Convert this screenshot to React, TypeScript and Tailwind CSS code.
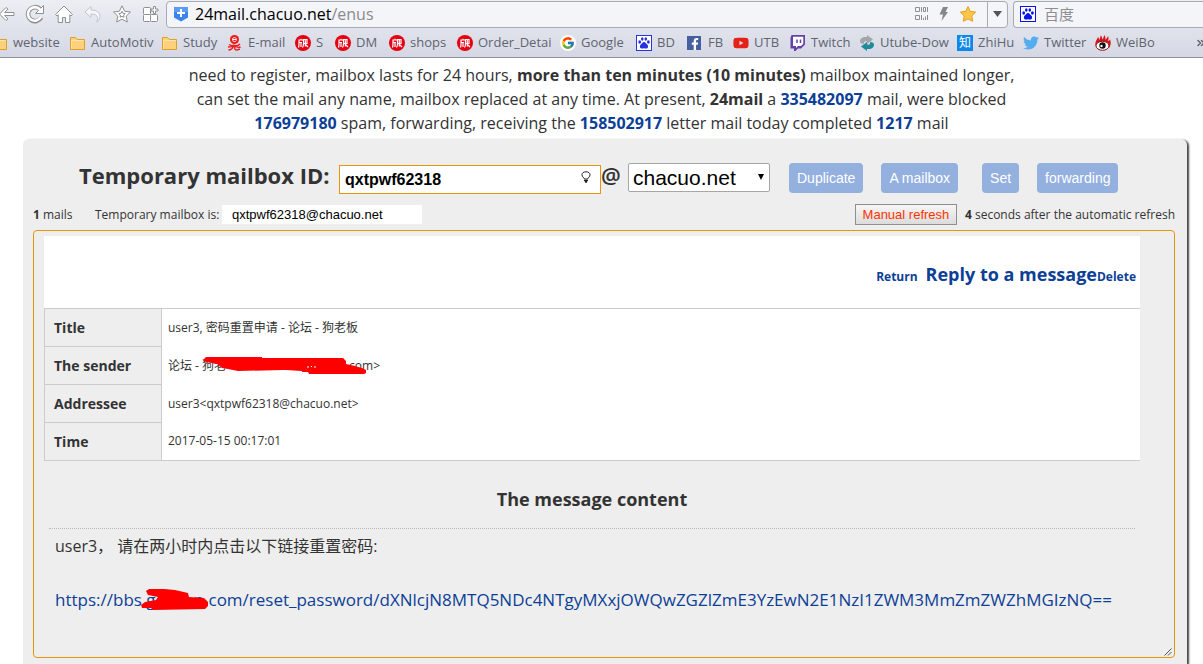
import type { ReactNode } from 'react';
import { FaFacebookF, FaTwitter, FaYoutube } from 'react-icons/fa';
import { FcGoogle } from 'react-icons/fc';
import { ChevronsRight } from 'lucide-react';

const NAV_ICON = 'h-5 w-5 shrink-0';

function BackIcon() {
  return (
    <svg viewBox="0 0 20 20" className={NAV_ICON}>
      <path d="M3.500 10 10 3.500l2 1.600-3.400 3.400H18v3H8.600l3.400 3.400-2 1.600z" fill="#fff" stroke="#8f8f93" strokeLinejoin="round" />
    </svg>
  );
}

function ReloadIcon() {
  return (
    <svg viewBox="0 0 20 20" className={NAV_ICON} fill="none">
      <path d="M16.200 13.500A7 7 0 1 1 14.800 5" stroke="#8f8f93" strokeWidth="4.600" />
      <path d="M18.500 1.500v8h-8z" fill="#fff" stroke="#8f8f93" strokeLinejoin="round" />
      <path d="M15.800 13A6.800 6.800 0 1 1 15 5.600" stroke="#fff" strokeWidth="2.600" />
    </svg>
  );
}

function HomeIcon() {
  return (
    <svg viewBox="0 0 20 20" className={NAV_ICON} fill="#fff" stroke="#8f8f93" strokeLinejoin="round">
      <path d="M1.500 10.500 10 2l8.500 8.500-1.500 1.500-1.200-1.200V18.500h-4.300v-5h-3v5H4.200v-7.700L3 12z" />
    </svg>
  );
}

function UndoIcon() {
  return (
    <svg viewBox="0 0 20 20" className={NAV_ICON} fill="#f5f6fa" stroke="#c3c5cc" strokeLinejoin="round">
      <path d="M2 8 8 2.500V6c6 0 9 2.500 9 6.500 0 2.500-1.500 4.500-3.500 5.500 1-1.500 1.500-3 1-4.500C14 11 12 10 8 10v3.500z" />
    </svg>
  );
}

function StarOutlineIcon() {
  return (
    <svg viewBox="0 0 20 20" className={NAV_ICON} fill="#fff" stroke="#8f8f93" strokeLinejoin="round">
      <path d="m10 1.800 2.600 5.400 5.900.8-4.300 4.100 1.100 5.900-5.300-2.900L4.700 18l1.100-5.900L1.500 8l5.900-.8z" />
      <path d="m10 7.300 1 2 2.200.3-1.600 1.500.4 2.200-2-1-2 1 .4-2.200-1.600-1.500 2.200-.3z" />
    </svg>
  );
}

function AppsIcon() {
  return (
    <svg viewBox="0 0 20 20" className={NAV_ICON} fill="#fff" stroke="#8f8f93">
      <rect x="2.500" y="3.500" width="7" height="7" rx="1" />
      <rect x="2.500" y="10.500" width="7" height="7" rx="1" />
      <rect x="9.500" y="10.500" width="7" height="7" rx="1" />
      <path d="M12.500 2.500h2v2.500H17v2h-2.500v2.500h-2V7H10V5h2.500z" />
    </svg>
  );
}

function ShieldIcon() {
  return (
    <svg viewBox="0 0 16 16" className="h-4 w-4 shrink-0">
      <path d="M1 1h14v10.500L8 15.500l-7-4z" fill="#3b83ee" />
      <path d="M1 1h14v5H1z" fill="#5b9af5" />
      <path d="M8 3v8M4 7h8" stroke="#fff" strokeWidth="2" />
    </svg>
  );
}

function QrIcon() {
  return (
    <svg viewBox="0 0 14 14" className="h-3.5 w-3.5" fill="none" stroke="#8f8f93">
      <path d="M.5.5h4v4h-4zM.5 8.500h4v4h-4zM8.500.5h2v4h-2zM6.500 0v5M12.500 0v5M6.500 8v5M8.500 11v2M10.500 9.500v3.500M12.500 8v5" />
    </svg>
  );
}

function FolderIcon() {
  return (
    <svg viewBox="0 0 16 16" className="h-4 w-4">
      <path d="M.5 14.500v-12h5l2 2h7v10z" fill="#fdd07c" stroke="#dda02a" />
      <path d="M1.500 13.500v-8h12" fill="none" stroke="#ffe2a6" />
    </svg>
  );
}

function OctopusIcon() {
  return (
    <svg viewBox="0 0 16 16" className="h-4 w-4" fill="none" stroke="#f01818">
      <circle cx="7.500" cy="4.500" r="4.500" fill="#f01818" stroke="none" />
      <path d="M5.500 4.500h4c0-2.600-4-2.600-4 0s3 2.500 4 1" stroke="#fff" />
      <path d="M2 9.500c3 2 9 2 11-.5M1 12c3 0 5-.5 6-2.500M8 10c1 2 3 3 5.500 2M6.500 11c-1 3-3 4-5 4M8.500 11c-2 3 0 4 1.500 4 1 0 1.500-1 3-.5" strokeWidth="1.400" />
    </svg>
  );
}

function SealIcon() {
  return (
    <svg viewBox="0 0 16 16" className="h-4 w-4" fill="none" stroke="#fff">
      <circle cx="8" cy="8" r="8" fill="#e60012" stroke="none" />
      <path d="M3.500 12.500c.8-2 .5-4.500.5-7.500h4.500M6 5V3.800M4.500 7.500H7M6 7v5M8.500 4.500H12v4H8.500zM8.500 8.500c0 2 0 2.500-1 4M10.300 4.500v7M10.500 9.500l2.500 2.500" strokeWidth="1.200" />
    </svg>
  );
}

function PawIcon({ color }: { color: string }) {
  return (
    <svg viewBox="0 0 16 16" className="h-4 w-4 shrink-0" fill={color}>
      <rect x=".5" y=".5" width="15" height="15" fill="#fff" stroke={color} />
      <ellipse cx="3.700" cy="7" rx="1.400" ry="1.800" />
      <ellipse cx="6.300" cy="4" rx="1.300" ry="1.800" />
      <ellipse cx="9.800" cy="4" rx="1.300" ry="1.800" />
      <ellipse cx="12.400" cy="7" rx="1.400" ry="1.800" />
      <path d="M8 7c1.500 0 2 1.500 3.200 2.600 1.600 1.500 1 4-1 4-.8 0-1.400-.3-2.200-.3s-1.400.3-2.200.3c-2 0-2.600-2.500-1-4C6 8.500 6.500 7 8 7z" />
    </svg>
  );
}

function TwitchIcon() {
  return (
    <svg viewBox="0 0 16 16" className="h-4 w-4">
      <path d="M1.500 0H15v9.500L11 13.500H8L5.500 16H4v-2.500H.5V3z" fill="#6441a5" />
      <path d="M3 1.800h10.300v7L11 11H8l-2 2v-2H3z" fill="#fff" />
      <path d="M7 4.500V8M10.500 4.500V8" stroke="#6441a5" strokeWidth="1.500" />
    </svg>
  );
}

function SwapIcon() {
  return (
    <svg viewBox="0 0 16 16" className="h-4 w-4">
      <path d="M1 6.500C1 3 4 1.500 8 2V0l6 4.500L8 9V6.500C5.500 6 4.500 7 5 9 2.500 9 1 8 1 6.500z" fill="#a3a5a9" />
      <path d="M15 9.500c0 3.500-3 5-7 4.500v2l-6-4.500L8 7v2.500c2.500.5 3.500-.5 3-2.500 2.500 0 4 1 4 2.500z" fill="#1f8a99" />
    </svg>
  );
}

function WeiboIcon() {
  return (
    <svg viewBox="0 0 16 16" className="h-4 w-4">
      <path d="M1 12C-1 7 2 5 3 2c1 1 1 2 1 3 1-1 1.500-3 1.500-4.500C7 1.500 7.300 3 7.300 4.500 8.500 3 9 1.500 9 0c1.500 1.500 1.700 3 1.300 4.800C11.500 4 12.500 2.500 13 1c1 2 .5 3.500-.3 5 1-.3 2-.8 2.500-1.500.8 3 .8 6-1.200 8.500z" fill="#d7141a" />
      <ellipse cx="7.500" cy="10.800" rx="6.500" ry="4.500" fill="#fff" stroke="#8a1013" />
      <circle cx="7.500" cy="10.500" r="3.200" fill="#111" />
      <circle cx="6.500" cy="11" r="1.200" fill="#fff" />
    </svg>
  );
}

const bookmarks: { label: string; icon: ReactNode }[] = [
  { label: 'website', icon: <FolderIcon /> },
  { label: 'AutoMotiv', icon: <FolderIcon /> },
  { label: 'Study', icon: <FolderIcon /> },
  { label: 'E-mail', icon: <OctopusIcon /> },
  { label: 'S', icon: <SealIcon /> },
  { label: 'DM', icon: <SealIcon /> },
  { label: 'shops', icon: <SealIcon /> },
  { label: 'Order_Detai', icon: <SealIcon /> },
  {
    label: 'Google',
    icon: (
      <span className="flex h-4 w-4 items-center justify-center rounded-full bg-white">
        <FcGoogle className="h-3.5 w-3.5" />
      </span>
    ),
  },
  { label: 'BD', icon: <PawIcon color="#2932e1" /> },
  {
    label: 'FB',
    icon: (
      <span className="flex h-3.5 w-3.5 items-end justify-end bg-[#4460a0]">
        <FaFacebookF className="h-3 w-3 text-white" />
      </span>
    ),
  },
  { label: 'UTB', icon: <FaYoutube className="h-4 w-4 text-[#e62117]" /> },
  { label: 'Twitch', icon: <TwitchIcon /> },
  { label: 'Utube-Dow', icon: <SwapIcon /> },
  {
    label: 'ZhiHu',
    icon: (
      <span className="flex h-4 w-4 items-center justify-center bg-[#0f88eb] text-xs text-white">知</span>
    ),
  },
  { label: 'Twitter', icon: <FaTwitter className="h-4 w-4 text-[#55acee]" /> },
  { label: 'WeiBo', icon: <WeiboIcon /> },
];

const actions = ['Duplicate', 'A mailbox', 'Set', 'forwarding'];

function BrowserChrome() {
  return (
    <header className="h-[58px] shrink-0 overflow-hidden border-b border-[#8f929c] bg-linear-to-b from-[#eceef3] to-[#d5d8e4] text-[#5f6470]">
      <div className="flex h-7 items-center gap-[5px]">
        <nav className="-ml-1 flex items-center gap-[9px]" aria-label="Browser">
          <button aria-label="Back"><BackIcon /></button>
          <button aria-label="Reload"><ReloadIcon /></button>
          <button aria-label="Home"><HomeIcon /></button>
          <button aria-label="Undo"><UndoIcon /></button>
          <button aria-label="Favourites"><StarOutlineIcon /></button>
          <button aria-label="Apps"><AppsIcon /></button>
        </nav>
        <div className="flex h-[27px] flex-1 items-center rounded border border-[#a9abb3] bg-[#f4f5f9]">
          <span className="ml-1.5 flex flex-1 items-center gap-1.5">
            <ShieldIcon />
            <span className="text-base text-[#8a8a8e]">
              <span className="text-black">24mail.chacuo.net</span>/enus
            </span>
          </span>
          <QrIcon />
          <svg viewBox="0 0 10 14" className="ml-2.5 h-3.5 w-2.5" fill="#85858a">
            <path d="M4 0h5L6.500 5H9L2.500 14 4 7.500H.5z" />
          </svg>
          <svg viewBox="0 0 18 18" className="mx-2.5 h-[18px] w-[18px]" fill="#fdc64b" stroke="#e8a020" strokeLinejoin="round">
            <path d="m9 1.500 2.300 4.800 5.400.8-3.900 3.800.9 5.400L9 14l-4.700 2.300.9-5.400L1.300 7.100l5.400-.8z" />
          </svg>
          <button aria-label="History" className="flex h-full w-5 items-center justify-center border-l border-[#a9abb3]">
            <svg viewBox="0 0 9 6" className="h-1.5 w-[9px]" fill="#55565c">
              <path d="M0 0h9L4.500 6z" />
            </svg>
          </button>
        </div>
        <div className="flex h-[27px] w-[190px] items-center gap-2 rounded-l border border-r-0 border-[#a9abb3] bg-[#f4f5f9] pl-1.5">
          <PawIcon color="#0a14e8" />
          <span className="text-[15px] text-[#8f8f93]">百度</span>
        </div>
      </div>
      <div className="flex h-[30px] items-center justify-between">
        <ul className="-ml-2 grid grid-cols-[78px_92px_65px_68px_40px_54px_68px_103px_76px_51px_46px_57px_69px_98px_66px_72px_80px] text-[13px]">
          {bookmarks.map((b) => (
            <li key={b.label}>
              <a href="#" className="flex items-center gap-1 whitespace-nowrap">
                <span className="flex w-[17px] shrink-0 items-center">{b.icon}</span>
                {b.label}
              </a>
            </li>
          ))}
        </ul>
        <ChevronsRight className="-mr-1 h-3 w-3 shrink-0" strokeWidth={3} />
      </div>
    </header>
  );
}

function Intro() {
  return (
    <p className="mt-[5px] text-center text-base leading-6">
      need to register, mailbox lasts for 24 hours, <b>more than ten minutes (10 minutes)</b> mailbox maintained
      longer,
      <br />
      can set the mail any name, mailbox replaced at any time. At present, <b>24mail</b> a{' '}
      <b className="text-[#0d3f96]">335482097</b> mail, were blocked
      <br />
      <b className="text-[#0d3f96]">176979180</b> spam, forwarding, receiving the{' '}
      <b className="text-[#0d3f96]">158502917</b> letter mail today completed{' '}
      <b className="text-[#0d3f96]">1217</b> mail
    </p>
  );
}

function MailboxForm() {
  return (
    <form className="ml-[46px] flex h-[31px] items-start">
      <label htmlFor="mailbox" className="w-[260px] text-[22px] leading-6 font-bold whitespace-nowrap">
        Temporary mailbox ID:
      </label>
      <div className="relative self-end">
        <input
          id="mailbox"
          defaultValue="qxtpwf62318"
          className="block h-[29px] w-[262px] border border-[#e8940c] bg-white px-[5px] font-['Liberation_Sans',sans-serif] text-base font-bold text-black"
        />
        <svg viewBox="0 0 10 12" className="absolute top-1.5 right-2.5 h-3 w-2.5" fill="none" stroke="#222">
          <path d="M3.500 8C3 6.500 1 6 1 3.800 1 2 2.500.8 5 .8S9 2 9 3.800C9 6 7 6.500 6.500 8z" />
          <path d="M3 9.500h4M4 11h2" strokeWidth="1.400" />
        </svg>
      </div>
      <span className="w-[27px] text-[22px] leading-6 font-semibold">@</span>
      <div className="relative">
        <select
          aria-label="Domain"
          className="block h-[29px] w-[142px] appearance-none rounded-xs border border-[#a6a6a6] bg-white pl-1 font-['Liberation_Sans',sans-serif] text-[21px] leading-6 text-black"
        >
          <option>chacuo.net</option>
        </select>
        <svg viewBox="0 0 6 6" className="pointer-events-none absolute top-[11px] right-1.5 h-1.5 w-1.5">
          <path d="M0 0h6L3 6z" />
        </svg>
      </div>
      <div className="ml-[19px] flex gap-[18px]">
        {actions.map((label) => (
          <button
            key={label}
            type="button"
            className="h-[30px] rounded-sm bg-[#93b0df] px-2 font-['Liberation_Sans',sans-serif] text-sm text-white nth-3:ml-1.5"
          >
            {label}
          </button>
        ))}
      </div>
    </form>
  );
}

function StatusRow() {
  return (
    <div className="mt-2.5 flex h-[21px] items-center justify-between text-xs">
      <div className="flex items-center">
        <span className="w-[62px]">
          <b>1</b> mails
        </span>
        <label htmlFor="current" className="w-[127px] whitespace-nowrap">Temporary mailbox is:</label>
        <input
          id="current"
          readOnly
          value="qxtpwf62318@chacuo.net"
          className="h-[19px] w-[200px] bg-white pl-2.5 font-['Liberation_Sans',sans-serif] text-[13px] text-black"
        />
      </div>
      <div className="flex items-center gap-2">
        <button className="h-[21px] w-[102px] border border-[#8f8f8f] bg-linear-to-b from-[#f6f6f6] to-[#dcdcdc] font-['Liberation_Sans',sans-serif] text-[13px] leading-4 text-[#ff3300]">
          Manual refresh
        </button>
        <span>
          <b>4</b> seconds after the automatic refresh
        </span>
      </div>
    </div>
  );
}

function Message() {
  return (
    <section className="relative mt-[5px] min-h-[428px] rounded border border-[#e8940c] pt-[5px] pr-[34px] pl-2.5">
      <div className="flex h-[72px] items-baseline justify-end bg-white pt-6 pr-1 font-bold text-[#0d3f96]">
        <a href="#" className="mr-2 text-xs">Return</a>
        <a href="#" className="text-lg">Reply to a message</a>
        <a href="#" className="text-xs">Delete</a>
      </div>
      <table className="w-full border-collapse border-y border-[#ccc] bg-white text-left text-xs">
        <tbody>
          <tr>
            <TitleCell>Title</TitleCell>
            <td className="px-1.5">user3, 密码重置申请 - 论坛 - 狗老板</td>
          </tr>
          <tr>
            <TitleCell>The sender</TitleCell>
            <td className="px-1.5">
              <span className="relative whitespace-nowrap">
                论坛 - 狗老
                <span className="inline-block w-[123px]" />
                com&gt;
                <svg viewBox="203 358 164 18" className="absolute top-0 left-[35px] h-[18px] w-[164px]" fill="#f00">
                  <path d="M203 361l3-3h56v1h81l3 3v3l9 2 7 2 4 2v3l-2 1h-55l-1-2h-6v-1l-16-1h-4l-44 1-10-2-6-1-5-4-11-2z" />
                  <path d="M307 368h2M311 367.500h1M314 368h2" stroke="#fff" />
                </svg>
              </span>
            </td>
          </tr>
          <tr>
            <TitleCell>Addressee</TitleCell>
            <td className="px-1.5">user3&lt;qxtpwf62318@chacuo.net&gt;</td>
          </tr>
          <tr>
            <TitleCell>Time</TitleCell>
            <td className="px-1.5">2017-05-15 00:17:01</td>
          </tr>
        </tbody>
      </table>
      <div className="mx-[5px]">
        <h2 className="border-b border-dotted border-[#bbb] pt-6 pb-[15px] text-center text-lg font-bold">
          The message content
        </h2>
        <div className="px-1.5 pt-[5px]">
          <p className="text-base">user3， 请在两小时内点击以下链接重置密码:</p>
          <p className="mt-[30px] text-[17px] leading-6">
            <a href="#" className="relative whitespace-nowrap text-[#0d3f96]">
              https://bbs.g
              <span className="inline-block w-[38px]" />
              n.com/reset_password/dXNlcjN8MTQ5NDc4NTgyMXxjOWQwZGZlZmE3YzEwN2E1NzI1ZWM3MmZmZWZhMGIzNQ==
              <svg viewBox="141 588 68 23" className="absolute top-0 left-[86px] h-[23px] w-[68px]" fill="#f00">
                <path d="M146 591l3-2h15l11 1 13 3 1 4 15 1 4 4v4l-3 3-52 1-2-2h-9l-1-3 4-3 11-2 2-3-10-2z" />
              </svg>
            </a>
          </p>
        </div>
      </div>
      <svg viewBox="0 0 8 8" className="absolute right-0.5 bottom-px h-2 w-2" stroke="#555" fill="none">
        <path d="M.5 7.500l7-7M4 7.500 7.500 4" />
      </svg>
    </section>
  );
}

function TitleCell({ children }: { children: ReactNode }) {
  return (
    <th className="h-[38px] w-[117px] border border-[#ccc] bg-[#eee] px-[9px] text-sm font-bold">{children}</th>
  );
}

export default function App() {
  return (
    <div className="flex min-h-screen flex-col overflow-hidden bg-white font-['Open_Sans','Noto_Sans_CJK_SC',sans-serif] text-[#333]">
      <BrowserChrome />
      <Intro />
      <main className="mt-1 mr-4 ml-[23px] flex-1 rounded-t-md bg-[#eee] pt-6 pr-3 pb-1.5 pl-2.5 shadow-[2px_1px_2px_0_#444]">
        <MailboxForm />
        <StatusRow />
        <Message />
      </main>
    </div>
  );
}
